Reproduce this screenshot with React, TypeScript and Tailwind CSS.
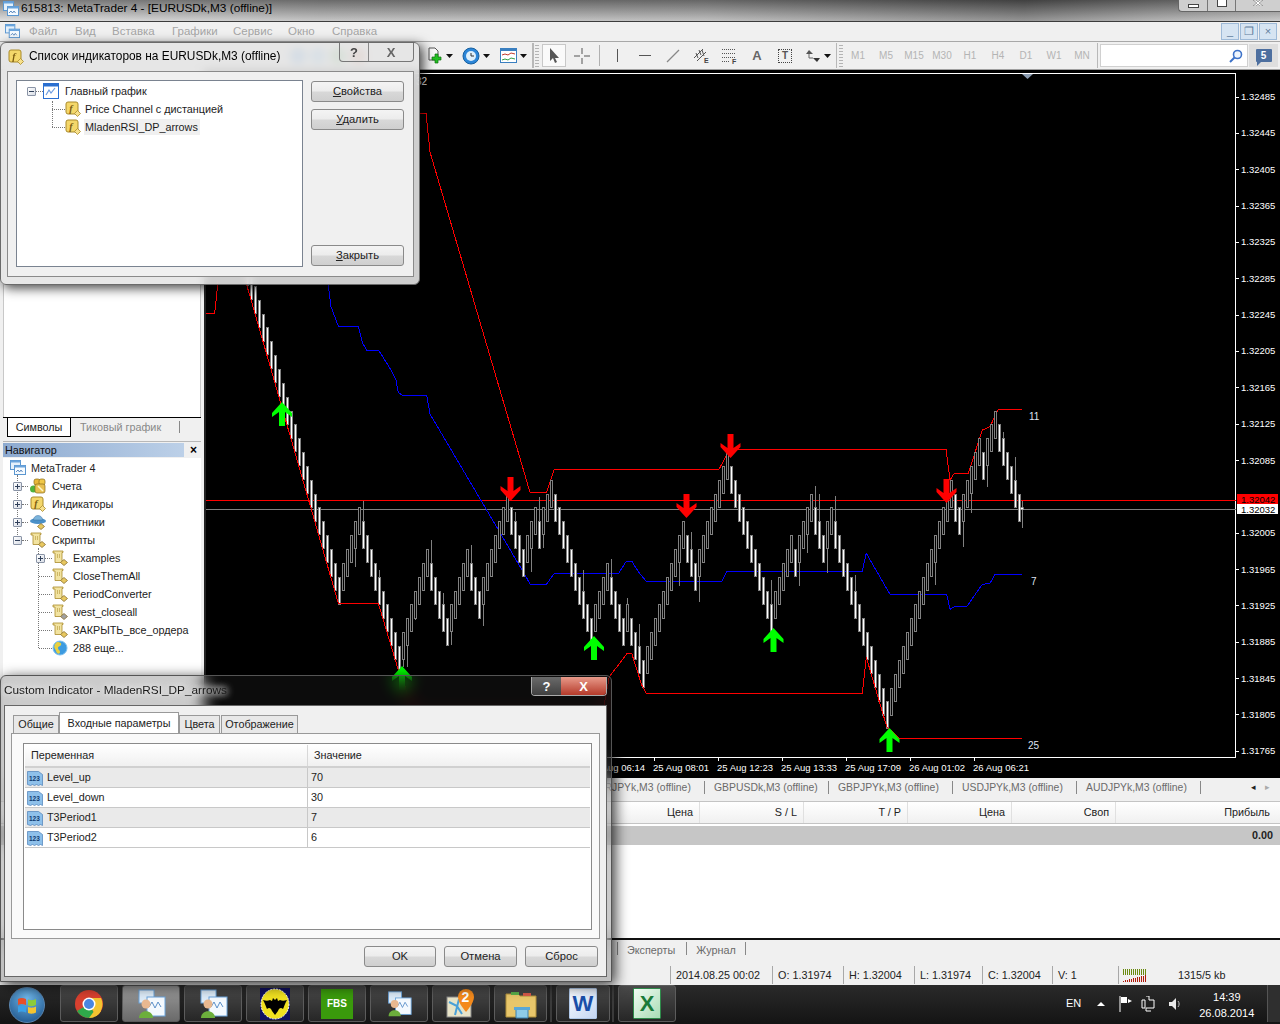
import React from 'react';

type Pt = [number, number];

// chart geometry read from the picture, in page pixels
const z9 = (pts: Pt[]): Pt[] => pts.map(([x, y]) => [206 + x / 3, 280 + y / 3]);
const z10 = (pts: Pt[]): Pt[] => pts.map(([x, y]) => [620 + x / 3, 400 + y / 3]);
const toPoints = (pts: Pt[]) => pts.map(([x, y]) => `${x.toFixed(1)},${y.toFixed(1)}`).join(' ');

const runs = [5, -10, 7, -5, 5, -3, 7, -4, 3, -1, 3, -10, 4, -4, 1, -4, 10, -3, 8, -11, 5, -1, 4, -3, 2, -14, 16, -2, 5, -1, 3, -6];
const STEP = 13.85;

const buildCandles = () => {
  const list: { i: number; top: number; up: boolean }[] = [];
  for (let i = -23; i <= 0; i++) list.push({ i, top: 576.7 + i * STEP, up: false });
  let k = 0;
  let i = 0;
  runs.forEach((r) => {
    for (let n = 0; n < Math.abs(r); n++) {
      k += r > 0 ? -1 : 1;
      i += 1;
      list.push({ i, top: 576.7 + k * STEP, up: r > 0 });
    }
  });
  return list;
};
const candles = buildCandles();

const wicks: Pt[] = [
  [6, 501], [4, 567], [10, 570], [16, 667], [17, 667], [19, 620], [23, 540], [26, 593], [28, 645], [33, 545], [36, 626],
  [44, 512], [46, 573], [48, 572], [50, 497], [51, 548], [61, 570], [68, 559], [72, 598], [75, 624], [85, 586], [88, 532],
  [90, 602], [108, 580], [115, 586], [117, 553], [119, 486], [120, 494], [122, 573], [124, 496], [129, 575], [145, 607],
  [149, 585], [156, 547], [158, 513], [162, 487], [166, 432], [169, 457],
];

const redLower = [
  // the stretch under the second dialog runs low enough to stay hidden
  ...z9([[118, 0], [397, 970], [517, 970], [577, 1170], [590, 1195], [620, 1300], [1190, 1300], [1210, 1190], [1260, 1125]]),
  ...z10([[20, 760], [35, 760], [65, 855], [79, 880], [727, 880], [739, 772], [800, 980], [838, 1015], [1205, 1015]]),
];
const redUpper: Pt[] = [
  [420, 113], [426, 113], [430, 152], [530, 492.3], [546.7, 492.3], [554.3, 469.3], [719, 469.3], [726.7, 455], [730, 449.3],
  [946, 449.3], [950, 480], [954.3, 473.3], [968.3, 473.3], [982.3, 430], [990, 426.7], [998.3, 409.3], [1021.7, 409.3],
];
const blue = [
  ...z9([[365, 0], [375, 80], [397, 138], [457, 138], [470, 190], [482, 211], [518, 211], [555, 270], [570, 300], [577, 338], [590, 346], [662, 346], [672, 402], [960, 890], [972, 912], [1022, 912], [1045, 880], [1238, 880], [1260, 845]]),
  ...z10([[20, 483], [35, 483], [55, 515], [79, 544], [305, 544], [320, 515], [330, 513], [727, 513], [739, 460], [810, 583], [980, 583], [990, 628], [1003, 620], [1040, 620], [1087, 553], [1110, 550], [1125, 523], [1205, 523]]),
];

const priceLabels = ['1.32485', '1.32445', '1.32405', '1.32365', '1.32325', '1.32285', '1.32245', '1.32205', '1.32165', '1.32125', '1.32085', '1.32005', '1.31965', '1.31925', '1.31885', '1.31845', '1.31805', '1.31765'];
const timeLabels = ['25 Aug 06:14', '25 Aug 08:01', '25 Aug 12:23', '25 Aug 13:33', '25 Aug 17:09', '26 Aug 01:02', '26 Aug 06:21'];

const Arrow = ({ x, y, up }: { x: number; y: number; up: boolean }) => {
  const pts: Pt[] = [[0, 0], [10, 11], [10, 15], [3, 10], [3, 24], [-3, 24], [-3, 10], [-10, 15], [-10, 11]];
  return (
    <polygon
      points={toPoints(pts.map(([a, b]) => [x + a, up ? y + b : y + 24 - b]))}
      fill={up ? '#00ff00' : '#ff0000'}
    />
  );
};

const ChartSvg = () => (
  <svg width={1074} height={708} viewBox="206 70 1074 708" className="block">
    <line x1={206} y1={73.5} x2={1236} y2={73.5} stroke="#fff" />
    <line x1={1235.5} y1={73} x2={1235.5} y2={757} stroke="#fff" />
    <line x1={206} y1={757.5} x2={1236} y2={757.5} stroke="#fff" />
    <polygon points="1022,74 1033,74 1027.5,79" fill="#8a9bb0" />
    <text x={416} y={85} fontSize={10} fill="#fff" fontFamily="Liberation Sans">32</text>

    <line x1={206} y1={500.5} x2={1236} y2={500.5} stroke="#ff0000" />
    <line x1={206} y1={509.5} x2={1236} y2={509.5} stroke="#808080" />

    <polyline points={toPoints([[206, 313.3], [214.7, 313.3], [217.7, 285], [218, 280]])} fill="none" stroke="#ff0000" shapeRendering="crispEdges" />
    <polyline points={toPoints(redUpper)} fill="none" stroke="#ff0000" shapeRendering="crispEdges" />
    <polyline points={toPoints(blue)} fill="none" stroke="#0000ff" shapeRendering="crispEdges" />

    {wicks.map(([i, end]) => {
      const c = candles.find((d) => d.i === i);
      if (!c) return null;
      const x = 338.5 + i * 4 + 1;
      return <line key={i} x1={x} x2={x} y1={c.top + 14} y2={end} stroke="#808080" shapeRendering="crispEdges" />;
    })}
    {candles.map((c) => (
      <rect
        key={c.i}
        x={338.5 + c.i * 4}
        y={Math.round(c.top) + 0.5}
        width={2}
        height={27}
        fill={c.up ? '#000' : '#fff'}
        stroke="#808080"
        shapeRendering="crispEdges"
      />
    ))}
    <line x1={1022.5} x2={1022.5} y1={501} y2={528} stroke="#808080" />
    <rect x={1020.5} y={507.5} width={3} height={2} fill="#fff" stroke="#808080" strokeWidth={0.5} />
    <polyline points={toPoints(redLower)} fill="none" stroke="#ff0000" shapeRendering="crispEdges" />

    <Arrow x={282} y={402} up />
    <Arrow x={402} y={666} up />
    <Arrow x={594} y={636} up />
    <Arrow x={773.5} y={628} up />
    <Arrow x={889.5} y={728} up />
    <Arrow x={510.5} y={477} up={false} />
    <Arrow x={686.5} y={494} up={false} />
    <Arrow x={730.5} y={434} up={false} />
    <Arrow x={946.5} y={479} up={false} />

    <g fontFamily="Liberation Sans" fontSize={10} fill="#dfe3f0">
      <text x={1029} y={420}>11</text>
      <text x={1031} y={585}>7</text>
      <text x={1028} y={749}>25</text>
    </g>

    <g fontFamily="Liberation Sans" fontSize={9.5} fill="#fff">
      {priceLabels.map((p) => {
        const n = Math.round((1.32485 - Number(p)) / 0.0004);
        const y = 96.5 + n * 36.35;
        return (
          <g key={p}>
            <line x1={1236} x2={1239} y1={Math.round(y) + 0.5} y2={Math.round(y) + 0.5} stroke="#fff" />
            <text x={1241} y={y + 3.5}>{p}</text>
          </g>
        );
      })}
      {timeLabels.map((t, i) => (
        <g key={t}>
          <line x1={590.5 + i * 64} x2={590.5 + i * 64} y1={757} y2={761} stroke="#fff" />
          <text x={589 + i * 64} y={771}>{t}</text>
        </g>
      ))}
    </g>
    <rect x={1237} y={494} width={41} height={10} fill="#ff0000" />
    <rect x={1237} y={504} width={41} height={10} fill="#fff" />
    <text x={1241} y={502.5} fontFamily="Liberation Sans" fontSize={9.5} fill="#000">1.32042</text>
    <text x={1241} y={512.5} fontFamily="Liberation Sans" fontSize={9.5} fill="#000">1.32032</text>
  </svg>
);

/* small icons */

const IndicatorIcon = ({ size = 16 }: { size?: number }) => (
  <svg width={size} height={size} viewBox="0 0 16 16" className="shrink-0">
    <rect x={1} y={1} width={12} height={12} rx={2} fill="#f4d76a" stroke="#a98a2a" />
    <text x={4.2} y={10.5} fontSize={10} fontStyle="italic" fontWeight="bold" fontFamily="Liberation Serif" fill="#7a5a10">f</text>
    <polygon points="12.5,9.5 15.5,12.5 12.5,15.5 9.5,12.5" fill="#f7e08c" stroke="#a98a2a" strokeWidth={0.8} />
  </svg>
);

const ScrollIcon = ({ gem = '#e8c860' }: { gem?: string }) => (
  <svg width={16} height={16} viewBox="0 0 16 16" className="shrink-0">
    <path d="M1 1h10v1.5H10V11h1.5v1.5H3V3H1z" fill="#f2e3a0" stroke="#a98a2a" strokeWidth={0.8} />
    <path d="M5 5h3M5 7h3" stroke="#a98a2a" strokeDasharray="1 1" />
    <polygon points="12,9.5 15.5,12.5 12,15.5 8.5,12.5" fill={gem} stroke="#8a7030" strokeWidth={0.8} />
  </svg>
);

const AccountIcon = () => (
  <svg width={16} height={16} viewBox="0 0 16 16" className="shrink-0">
    <circle cx={3.5} cy={11} r={3.5} fill="#4fb33c" />
    <rect x={4} y={1} width={6} height={6} rx={2} fill="#e8b838" stroke="#8a6a18" strokeWidth={0.7} />
    <rect x={9} y={1} width={6} height={6} rx={2} fill="#f0c848" stroke="#8a6a18" strokeWidth={0.7} />
    <rect x={5} y={6} width={10} height={9} rx={2} fill="#e8c050" stroke="#8a6a18" strokeWidth={0.7} />
    <path d="M8 8l5 5" stroke="#fff6c8" strokeWidth={1.5} />
  </svg>
);

const ExpertIcon = () => (
  <svg width={16} height={16} viewBox="0 0 16 16" className="shrink-0">
    <ellipse cx={8} cy={7} rx={8} ry={3} fill="#4a90c8" />
    <path d="M3.5 6c0-6 9-6 9 0z" fill="#7cb4dc" stroke="#3a70a0" strokeWidth={0.5} />
    <polygon points="11,9.5 14.5,12.5 11,15.5 7.5,12.5" fill="#e8c860" stroke="#8a7030" strokeWidth={0.8} />
  </svg>
);

const GlobeIcon = () => (
  <svg width={16} height={16} viewBox="0 0 16 16" className="shrink-0">
    <circle cx={8} cy={8} r={7} fill="#3d9be0" stroke="#7cc0f0" />
    <path d="M5 2c3 0 5 1 4 3-1 2-3 1-3 3s2 2 2 4-2 2-3 1-1-3-2-4-1-3 0-5z" fill="#e8d040" />
  </svg>
);

const MtIcon = ({ size = 16 }: { size?: number }) => (
  <svg width={size} height={size} viewBox="0 0 16 16" className="shrink-0">
    <rect x={0.5} y={0.5} width={10} height={9} fill="#e4f0fb" stroke="#5a96d0" />
    <rect x={0.5} y={0.5} width={10} height={2} fill="#6aa4dc" />
    <rect x={4.5} y={5.5} width={11} height={9} fill="#f6fbff" stroke="#5a96d0" />
    <rect x={4.5} y={5.5} width={11} height={2} fill="#6aa4dc" />
    <path d="M6 12l2-2 1.5 2 1.5-2 1.5 2" fill="none" stroke="#3a70b0" strokeWidth={0.8} />
  </svg>
);

const ChartWinIcon = () => (
  <svg width={16} height={16} viewBox="0 0 16 16" className="shrink-0">
    <rect x={0.5} y={0.5} width={15} height={15} fill="#fff" stroke="#2a6fd0" />
    <rect x={0.5} y={0.5} width={15} height={3} fill="#2a6fd0" />
    <path d="M3 12l3-5 2 3 4-5" fill="none" stroke="#6a9ae0" strokeWidth={1.2} />
  </svg>
);

const NumIcon = () => (
  <svg width={16} height={16} viewBox="0 0 16 16" className="shrink-0">
    <path d="M0.5 1.5h11l4 3v11l-2-1-2 1-2-1-2 1-2-1-2 1-3-1z" fill="#8ec0ea" stroke="#4a80b8" strokeWidth={0.7} />
    <text x={2} y={11} fontSize={6.5} fontWeight="bold" fontFamily="Liberation Sans" fill="#103a70">123</text>
  </svg>
);

const Expander = ({ open }: { open?: boolean }) => (
  <span className="relative flex h-[9px] w-[9px] shrink-0 items-center justify-center rounded-[1px] border border-[#8a94a6] bg-[linear-gradient(135deg,#fff,#d8dde6)]">
    <span className="h-px w-[5px] bg-[#30405a]" />
    {!open && <span className="absolute h-[5px] w-px bg-[#30405a]" />}
  </span>
);

const Grip = () => (
  <span className="flex h-[22px] w-[4px] shrink-0 flex-col justify-between">
    {[0, 1, 2, 3, 4, 5, 6, 7].map((n) => (
      <span key={n} className="h-px w-full bg-[#b4b4b4]" />
    ))}
  </span>
);

const Caret = () => (
  <svg width={7} height={4} viewBox="0 0 7 4" className="shrink-0">
    <polygon points="0,0 7,0 3.5,4" fill="#111" />
  </svg>
);

const Tool = ({ children, active }: { children: React.ReactNode; active?: boolean }) => (
  <span className={`flex h-[23px] w-[24px] shrink-0 items-center justify-center ${active ? 'border border-[#c8c8c8] bg-[#fafafa]' : ''}`}>
    {children}
  </span>
);

const WinButton = ({ children, className = '' }: { children: React.ReactNode; className?: string }) => (
  <button
    type="button"
    className={`flex h-[21px] items-center justify-center rounded-[3px] border border-[#8a8a8a] bg-[linear-gradient(#f4f4f4_0%,#ececec_48%,#d8d8d8_52%,#cfcfcf_100%)] text-[11.2px] text-[#222] ${className}`}
  >
    {children}
  </button>
);

/* window chrome */

const TitleBar = () => (
  <div className="relative flex h-[22px] items-start gap-[2px] border-b border-[#3c3c3c] bg-[linear-gradient(180deg,rgba(30,30,30,0.45),rgba(255,255,255,0.35)),linear-gradient(90deg,#d0d0d0_0%,#a8a8a8_25%,#a0a0a0_55%,#5c5c5c_80%,#8c8c8c_90%,#b0b0b0_100%)] pl-[3px] pt-[1px]">
    <MtIcon />
    <span className="text-[11.8px] leading-[14px] text-black">615813: MetaTrader 4 - [EURUSDk,M3 (offline)]</span>
    <div className="absolute right-0 top-0 flex h-[12px] w-[102px] overflow-hidden rounded-bl-[4px] border-b border-l border-[#666] bg-[#cfcfcf]">
      <span className="flex w-[29px] items-center justify-center border-r border-[#777]">
        <span className="h-[4px] w-[11px] border border-[#444] bg-white" />
      </span>
      <span className="flex w-[28px] items-start justify-center border-r border-[#777]">
        <span className="h-[7px] w-[10px] border border-t-0 border-[#444] bg-white" />
      </span>
      <span className="flex flex-1 items-start justify-center">
        <svg width={12} height={6} viewBox="0 0 12 6">
          <path d="M1 0l4 3-4 3h3l2-2 2 2h3L7 3l4-3H8L6 2 4 0z" fill="#fff" stroke="#666" strokeWidth={0.5} />
        </svg>
      </span>
    </div>
  </div>
);

const menuItems: [string, string][] = [
  ['Файл', 'w-[46px]'],
  ['Вид', 'w-[37px]'],
  ['Вставка', 'w-[60px]'],
  ['Графики', 'w-[61px]'],
  ['Сервис', 'w-[55px]'],
  ['Окно', 'w-[44px]'],
  ['Справка', 'w-[50px]'],
];

const MenuBar = () => (
  <div className="flex h-[20px] items-center border-b border-[#a8a8a8] bg-[#f0f0f0] pl-[5px] text-[11.5px]">
    <span className="mr-[9px]">
      <MtIcon size={15} />
    </span>
    <div className="flex flex-1">
      {menuItems.map(([m, w]) => (
        <span key={m} className={`${w} text-[#a6a6a6]`}>{m}</span>
      ))}
    </div>
    <div className="mr-[3px] flex gap-[1px]">
      {['_', '❐', '×'].map((g) => (
        <span key={g} className="flex h-[17px] w-[18px] items-center justify-center border border-[#9ebad8] bg-[#d6e4f2] text-[11px] leading-none text-[#5f7c9c]">{g}</span>
      ))}
    </div>
  </div>
);

const frames = ['M1', 'M5', 'M15', 'M30', 'H1', 'H4', 'D1', 'W1', 'MN'];

const Toolbar = () => (
  <div className="flex h-[28px] items-center border-b border-[#a0a0a0] bg-[#f0f0f0]">
    {/* hidden behind the glass of the first dialog */}
    <div className="ml-[290px] flex w-[135px] shrink-0 gap-[4px]">
      <span className="h-[16px] w-[16px] rounded-full bg-[#3d8fe0]" />
      <span className="h-[16px] w-[16px] rounded-full bg-[#69b3ec]" />
      <span className="h-[16px] w-[16px] rounded-full bg-[#5fb060]" />
      <span className="h-[16px] w-[16px] rounded-full bg-[#d87f60]" />
    </div>
    <span className="flex w-[21px] shrink-0 justify-center">
      <svg width={17} height={18} viewBox="0 0 17 18">
        <path d="M2 1h6l3 3v9H2z" fill="#f8f8f8" stroke="#555" />
        <path d="M8 7h3v3h3v3h-3v3H8v-3H5v-3h3z" fill="#22c022" stroke="#107010" strokeWidth={0.7} />
      </svg>
    </span>
    <Caret />
    <span className="ml-[8px] flex w-[20px] shrink-0 justify-center">
      <svg width={18} height={18} viewBox="0 0 18 18">
        <circle cx={9} cy={9} r={8} fill="#2c86d8" stroke="#17609f" />
        <circle cx={9} cy={9} r={5} fill="#dff0fb" />
        <path d="M9 6v3h3" stroke="#333" fill="none" />
      </svg>
    </span>
    <span className="ml-[2px] shrink-0"><Caret /></span>
    <span className="ml-[8px] flex w-[20px] shrink-0 justify-center">
      <svg width={17} height={15} viewBox="0 0 17 15">
        <rect x={0.5} y={0.5} width={16} height={14} fill="#fff" stroke="#3a7fc0" />
        <rect x={1} y={1} width={15} height={2} fill="#3a7fc0" />
        <path d="M2 7l3-1 3 1 3-2 4 1" fill="none" stroke="#c0392b" />
        <path d="M2 12l3-1 3 1 3-2 4 1" fill="none" stroke="#2f9e44" />
      </svg>
    </span>
    <span className="ml-[2px] shrink-0"><Caret /></span>
    <span className="ml-[5px] h-[25px] w-[2px] shrink-0 bg-[#b8b8b8]" />
    <span className="ml-px shrink-0"><Grip /></span>
    <div className="ml-[3px] flex shrink-0 items-center gap-[4px]">
      <Tool active>
        <svg width={11} height={16} viewBox="0 0 11 16"><path d="M1 0v13l3-3 2 5 2-1-2-4h4z" fill="#555" /></svg>
      </Tool>
      <Tool>
        <svg width={16} height={16} viewBox="0 0 16 16"><path d="M8 0v6M8 10v6M0 8h6M10 8h6" stroke="#555" /></svg>
      </Tool>
      <span className="mx-[1px] h-[21px] w-px shrink-0 bg-[#b0b0b0]" />
      <Tool><span className="h-[13px] w-px bg-[#555]" /></Tool>
      <Tool><span className="h-px w-[12px] bg-[#555]" /></Tool>
      <Tool>
        <svg width={14} height={14} viewBox="0 0 14 14"><path d="M1 13L13 1" stroke="#888" strokeWidth={1.2} /></svg>
      </Tool>
      <Tool>
        <svg width={16} height={17} viewBox="0 0 16 17">
          <path d="M1 11L10 2M4 14L13 5M3 6l2 5M6 3l2 5M9 3l2 6" stroke="#555" />
          <text x={11} y={16} fontSize={7} fontWeight="bold" fontFamily="Liberation Sans" fill="#444">E</text>
        </svg>
      </Tool>
      <Tool>
        <svg width={16} height={16} viewBox="0 0 16 16">
          <path d="M1 1.5h13M1 5.5h13M1 9.5h13M1 13.5h8" stroke="#555" strokeDasharray="1 1" />
          <text x={11} y={16} fontSize={7} fontWeight="bold" fontFamily="Liberation Sans" fill="#444">F</text>
        </svg>
      </Tool>
      <Tool><span className="text-[13px] font-bold text-[#666]">A</span></Tool>
      <Tool>
        <span className="flex h-[14px] w-[14px] items-center justify-center border border-dotted border-[#444] text-[10px] font-bold leading-none text-[#555]">T</span>
      </Tool>
      <Tool>
        <svg width={14} height={14} viewBox="0 0 14 14">
          <polygon points="3,1 7,5 0,5" fill="#555" />
          <polygon points="11,13 7,9 14,9" fill="#333" />
          <path d="M3 5v4h4" fill="none" stroke="#666" />
        </svg>
      </Tool>
    </div>
    <span className="ml-[-1px] shrink-0"><Caret /></span>
    <span className="ml-[5px] h-[25px] w-px shrink-0 bg-[#b8b8b8]" />
    <span className="ml-[2px] shrink-0"><Grip /></span>
    <div className="ml-px flex shrink-0">
      {frames.map((f) => (
        <span key={f} className="w-[28px] shrink-0 text-center text-[10px] text-[#b4b4b4]">{f}</span>
      ))}
    </div>
    <span className="ml-px h-[25px] w-px shrink-0 bg-[#b8b8b8]" />
    <div className="ml-[2px] flex h-[23px] w-[148px] shrink-0 items-center justify-end border border-[#d0d0d0] bg-white pr-[4px]">
      <svg width={14} height={14} viewBox="0 0 14 14">
        <circle cx={8.5} cy={5.5} r={4} fill="#eef5fd" stroke="#3d72c8" strokeWidth={1.6} />
        <path d="M5.5 8.5L1 13" stroke="#3d72c8" strokeWidth={2} />
      </svg>
    </div>
    <span className="ml-px flex h-[23px] w-[29px] shrink-0 items-center justify-center bg-[#dedede]">
      <span className="relative flex h-[13px] w-[16px] items-center justify-center rounded-[1px] bg-[#4d6f9f] text-[10px] font-bold leading-none text-white">
        5
        <span className="absolute -bottom-[4px] left-[1px] h-0 w-0 border-r-[4px] border-t-[4px] border-r-transparent border-t-[#4d6f9f]" />
      </span>
    </span>
  </div>
);

/* navigator */

type NavRow = { label: string; icon: React.ReactNode; level: 0 | 1 | 2; exp?: 'plus' | 'minus' };

const navRows: NavRow[] = [
  { label: 'MetaTrader 4', icon: <MtIcon />, level: 0 },
  { label: 'Счета', icon: <AccountIcon />, level: 1, exp: 'plus' },
  { label: 'Индикаторы', icon: <IndicatorIcon />, level: 1, exp: 'plus' },
  { label: 'Советники', icon: <ExpertIcon />, level: 1, exp: 'plus' },
  { label: 'Скрипты', icon: <ScrollIcon />, level: 1, exp: 'minus' },
  { label: 'Examples', icon: <ScrollIcon />, level: 2, exp: 'plus' },
  { label: 'CloseThemAll', icon: <ScrollIcon />, level: 2 },
  { label: 'PeriodConverter', icon: <ScrollIcon />, level: 2 },
  { label: 'west_closeall', icon: <ScrollIcon gem="#a0a0a0" />, level: 2 },
  { label: 'ЗАКРЫТЬ_все_ордера', icon: <ScrollIcon />, level: 2 },
  { label: '288 еще...', icon: <GlobeIcon />, level: 2 },
];

const Sidebar = () => (
  <div className="flex w-[204px] shrink-0 flex-col bg-[#f0f0f0] pl-[3px] pr-[3px]">
    <div className="h-[347px] border-x border-[#c8c8c8] bg-white" />
    <div className="flex h-[19px] items-start border-t border-black pl-[4px]">
      <span className="flex h-[19px] w-[64px] items-center justify-center border-x border-b border-black bg-white">Символы</span>
      <span className="ml-[9px] flex-1 text-[#888] leading-[18px]">Тиковый график</span>
      <span className="mr-[21px] mt-[3px] h-[12px] w-px bg-[#888]" />
    </div>
    <div className="mt-[5px] h-px bg-[#b8b8b8]" />
    <div className="mt-[1px] flex h-[14px] items-center justify-between">
      <span className="flex h-[14px] w-[181px] items-center bg-[linear-gradient(90deg,#8daad0,#bcd0e8)] pl-[2px] leading-none text-[#111]">Навигатор</span>
      <span className="mr-[4px] text-[12px] font-bold leading-none text-black">×</span>
    </div>
    <div className="relative mt-px flex-1 bg-white pt-[1px]">
      {/* tree guide lines */}
      <span className="absolute left-[14px] top-[17px] h-[66px] border-l border-dotted border-[#777]" />
      <span className="absolute left-[35px] top-[90px] h-[100px] border-l border-dotted border-[#777]" />
      {navRows.map((r) => (
        <div key={r.label} className="flex h-[18px] items-center whitespace-nowrap">
          {r.level === 0 && <span className="w-[7px]" />}
          {r.level === 1 && (
            <span className="flex w-[27px] items-center pl-[10px]">
              {r.exp && <Expander open={r.exp === 'minus'} />}
              <span className="w-[6px] border-t border-dotted border-[#777]" />
            </span>
          )}
          {r.level === 2 && (
            <span className="flex w-[49px] items-center justify-end">
              {r.exp && <Expander />}
              <span className={`${r.exp ? 'w-[7px]' : 'w-[13px]'} border-t border-dotted border-[#777]`} />
            </span>
          )}
          {r.icon}
          <span className={r.level === 0 ? 'ml-[5px]' : r.level === 1 ? 'ml-[6px]' : 'ml-[5px]'}>{r.label}</span>
        </div>
      ))}
    </div>
  </div>
);

/* terminal */

const chartTabs = ['EURJPYk,M3 (offline)', 'GBPUSDk,M3 (offline)', 'GBPJPYk,M3 (offline)', 'USDJPYk,M3 (offline)', 'AUDJPYk,M3 (offline)'];
const tableCols = ['Цена', 'S / L', 'T / P', 'Цена', 'Своп'];

const Terminal = () => (
  <div className="flex h-[187px] flex-col bg-white">
    <div className="flex h-[20px] items-center bg-[#f0f0f0] pl-[581px] text-[10.4px] text-[#6a6a6a]">
      {chartTabs.map((t) => (
        <span key={t} className="flex w-[124px] shrink-0 items-center justify-between whitespace-nowrap pl-[9px]">
          <span>{t}</span>
          <span className="h-[13px] w-px bg-[#888]" />
        </span>
      ))}
      <span className="ml-[50px] text-[9px] text-[#222]">◂</span>
      <span className="ml-[9px] text-[9px] text-[#aaa]">▸</span>
    </div>
    <div className="h-[3px] bg-[#f0f0f0]" />
    <div className="flex h-[23px] border-y border-[#c4c4c4] bg-[linear-gradient(#ffffff,#f0f0f0)]">
      <span className="w-[596px] border-r border-[#e0e0e0]" />
      {tableCols.map((c, i) => (
        <span key={i} className="flex w-[104px] items-center justify-end border-r border-[#e0e0e0] pr-[6px]">{c}</span>
      ))}
      <span className="flex flex-1 items-center justify-end pr-[10px]">Прибыль</span>
    </div>
    <div className="mt-[2px] flex h-[19px] items-center justify-end bg-[#c6c6c6] pr-[7px] font-bold">0.00</div>
    <div className="flex-1" />
    <div className="flex h-[27px] items-start border-t-2 border-[#111] bg-[#f0f0f0] pt-[2px] text-[#6a6a6a]">
      <span className="ml-[617px] h-[13px] w-px bg-[#888]" />
      <span className="ml-[9px]">Эксперты</span>
      <span className="ml-[11px] h-[13px] w-px bg-[#888]" />
      <span className="ml-[9px]">Журнал</span>
      <span className="ml-[9px] h-[13px] w-px bg-[#888]" />
    </div>
  </div>
);

const statusCells: [string, string][] = [
  ['2014.08.25 00:02', 'w-[102px]'],
  ['O: 1.31974', 'w-[71px]'],
  ['H: 1.32004', 'w-[71px]'],
  ['L: 1.31974', 'w-[68px]'],
  ['C: 1.32004', 'w-[70px]'],
  ['V: 1', 'w-[66px]'],
];

const StatusBar = () => (
  <div className="flex h-[20px] items-center bg-[#f0f0f0] pl-[670px]">
    {statusCells.map(([t, w]) => (
      <span key={t} className={`${w} h-[18px] border-l border-[#a8a8a8] pl-[5px] leading-[18px]`}>{t}</span>
    ))}
    <span className="flex h-[18px] w-[60px] items-center border-l border-[#a8a8a8] pl-[4px]">
      <svg width={25} height={13} viewBox="0 0 25 13" shapeRendering="crispEdges">
        <rect x={0} y={0} width={24} height={6} fill="#6a8a10" />
        <path d="M0 6L24 0V13H0z" fill="#8a9a20" opacity={0} />
        {Array.from({ length: 12 }).map((_, i) => (
          <g key={i}>
            <rect x={i * 2 + 1} y={0} width={1} height={13} fill="#f0f0f0" />
            <rect x={i * 2} y={Math.round(6 + (11 - i) / 2)} width={1} height={13 - Math.round(6 + (11 - i) / 2)} fill="#b01808" />
          </g>
        ))}
      </svg>
    </span>
    <span>1315/5 kb</span>
  </div>
);

/* taskbar */

const TaskButton = ({ children, active, width = 'w-[58px]' }: { children: React.ReactNode; active?: boolean; width?: string }) => (
  <span
    className={`flex h-[37px] ${width} shrink-0 items-center justify-center rounded-[3px] border border-[#5c5c5c] ${active ? 'bg-[linear-gradient(#9a9a9a,#6a6a6a)]' : 'bg-[linear-gradient(#4a4a4a,#262626)]'}`}
  >
    {children}
  </span>
);

const MtPerson = ({ size = 30 }: { size?: number }) => (
  <svg width={size} height={size} viewBox="0 0 30 30">
    <rect x={3} y={1} width={15} height={13} fill="#dcebf8" stroke="#6aa4dc" />
    <rect x={11} y={8} width={18} height={19} fill="#f4f9fe" stroke="#6aa4dc" />
    <path d="M13 18l3-5 3 6 3-6 3 5" fill="none" stroke="#5a8fc8" />
    <circle cx={10} cy={15} r={4.5} fill="#e8b890" />
    <path d="M3 29c0-9 14-9 14 0z" fill="#6cae3c" />
  </svg>
);

const Taskbar = () => (
  <div className="flex h-[39px] items-start bg-[linear-gradient(#2a2a2a,#141414)] text-white">
    <span className="ml-[9px] mt-[2px] flex h-[36px] w-[36px] shrink-0 items-center justify-center rounded-full border border-[#5a86b0] bg-[radial-gradient(circle_at_50%_30%,#6fb6e8,#154a82)]">
      <svg width={20} height={18} viewBox="0 0 20 18">
        <path d="M1 3c3-1.500 5-1 8 0v6c-3-1-5-1.500-8 0z" fill="#e8502a" />
        <path d="M11 3.500c3 1 5 1 8-.5v6c-3 1.500-5 1.500-8 .5z" fill="#8ccb3a" />
        <path d="M1 10.500c3-1.500 5-1 8 0v6c-3-1-5-1.500-8 0z" fill="#39a0e8" />
        <path d="M11 11c3 1 5 1 8-.5v6c-3 1.500-5 1.500-8 .5z" fill="#f4c430" />
      </svg>
    </span>
    <div className="ml-[15px] flex gap-[4px]">
      <TaskButton>
        <svg width={28} height={28} viewBox="0 0 28 28">
          <circle cx={14} cy={14} r={14} fill="#d8402f" />
          <path d="M14 14L2 21A14 14 0 0 0 21 26z" fill="#2fa84a" />
          <path d="M14 14L26 21A14 14 0 0 1 14 28 L20 20z" fill="#f4c430" />
          <path d="M14 8h12a14 14 0 0 1 -5 18l-7-12z" fill="#f4c430" />
          <circle cx={14} cy={14} r={6.500} fill="#fff" />
          <circle cx={14} cy={14} r={5} fill="#4a86e0" />
        </svg>
      </TaskButton>
      <TaskButton active><MtPerson /></TaskButton>
      <TaskButton><MtPerson /></TaskButton>
      <TaskButton>
        <svg width={30} height={32} viewBox="0 0 30 32">
          <rect width={30} height={32} fill="#101060" />
          <ellipse cx={15} cy={16} rx={14} ry={15} fill="#f0e020" stroke="#fff" strokeDasharray="2 1" />
          <path d="M3 12c3 1 5 1 7 0l2 1 1-3 2 2 2-2 1 3 2-1c2 1 4 1 7 0-2 3-3 7-4 9-2-2-4-1-5 2l-3 4-3-4c-1-3-3-4-5-2-1-2-2-6-4-9z" fill="#000" />
        </svg>
      </TaskButton>
      <TaskButton>
        <span className="flex h-[30px] w-[32px] items-center justify-center bg-[#3a9a0c] text-[10px] font-bold leading-none text-white">FBS</span>
      </TaskButton>
      <TaskButton><MtPerson size={26} /></TaskButton>
      <TaskButton>
        <svg width={32} height={32} viewBox="0 0 32 32">
          <rect x={2} y={9} width={24} height={20} fill="#e8e4c8" stroke="#888" />
          <path d="M4 14l8 4 5 8M14 11l-4 16" stroke="#4aa0d8" strokeWidth={2} fill="none" />
          <path d="M21 1a8 8 0 0 1 8 8c0 6-8 15-8 15s-8-9-8-15a8 8 0 0 1 8-8z" fill="#f48a1c" />
          <text x={16.500} y={14} fontSize={14} fontWeight="bold" fontFamily="Liberation Sans" fill="#fff">2</text>
        </svg>
      </TaskButton>
      <TaskButton width="w-[53px]">
        <svg width={32} height={30} viewBox="0 0 32 30">
          <path d="M1 5h12l2 2h16v21H1z" fill="#e8c66a" stroke="#b0903a" />
          <rect x={6} y={3} width={8} height={3} fill="#5ab04a" />
          <rect x={18} y={4} width={8} height={3} fill="#d85a4a" />
          <path d="M11 20h12v9H11z" fill="#8ecbe8" stroke="#3a80b0" />
          <rect x={9} y={18} width={16} height={3} fill="#5aa8d8" />
        </svg>
      </TaskButton>
      <span className="ml-[-1px] h-[37px] w-[2px] shrink-0 bg-[#3a3a3a]" />
      <TaskButton width="w-[54px]">
        <span className="flex h-[31px] w-[28px] items-center justify-center rounded-[1px] border border-[#b0c8e8] bg-[linear-gradient(135deg,#fafcff,#c4d6f2)] text-[22px] font-bold leading-none text-[#1a4ea8]">W</span>
      </TaskButton>
      <span className="ml-[-2px] h-[37px] w-[2px] shrink-0 bg-[#3a3a3a]" />
      <TaskButton>
        <span className="flex h-[31px] w-[28px] items-center justify-center rounded-[1px] border border-[#2f8a4a] bg-[linear-gradient(135deg,#f2fbf4,#a8dcb4)] text-[22px] font-bold leading-none text-[#1a7a3a]">X</span>
      </TaskButton>
    </div>
    <span className="ml-[390px] mt-[10px] text-[11px]">EN</span>
    <span className="ml-[16px] mt-[17px] h-0 w-0 border-x-[4px] border-b-[4px] border-x-transparent border-b-white" />
    <svg width={14} height={16} viewBox="0 0 14 16" className="ml-[14px] mt-[11px] shrink-0">
      <path d="M1 0v16" stroke="#fff" />
      <path d="M2 1h6v6H2zM9 3l4 2-4 2z" fill="#fff" />
    </svg>
    <svg width={14} height={16} viewBox="0 0 14 16" className="ml-[8px] mt-[11px] shrink-0">
      <path d="M5 0h3v4h5v8H5v3h5M1 4h3v8H1z" fill="none" stroke="#fff" />
    </svg>
    <svg width={12} height={14} viewBox="0 0 12 14" className="ml-[14px] mt-[12px] shrink-0">
      <path d="M0 5h3l4-4v12l-4-4H0z" fill="#e8e8e8" />
      <path d="M9 4c1.500 2 1.500 4 0 6" fill="none" stroke="#bbb" />
    </svg>
    <span className="ml-[19px] mt-[4px] flex w-[53px] flex-col items-center text-[11px] leading-[16px]">
      <span>14:39</span>
      <span>26.08.2014</span>
    </span>
    <span className="ml-[14px] h-[37px] w-[13px] border-l border-[#555] bg-[#2f2f2f]" />
  </div>
);

/* dialogs */

const IndicatorList = () => (
  <div className="absolute left-0 top-[42px] flex h-[243px] w-[420px] flex-col rounded-[6px] border border-[#6a6a6a] bg-[#e4e4e4]/90 pl-[6px] shadow-[3px_3px_12px_rgba(0,0,0,0.75)] backdrop-blur-[4px]">
    <div className="relative flex h-[28px] shrink-0 items-center gap-[5px] pl-[1px]">
      <IndicatorIcon />
      <span className="text-[11.9px] text-black">Список индикаторов на EURUSDk,M3 (offline)</span>
      <div className="absolute right-[5px] top-0 flex h-[19px] w-[75px] rounded-b-[4px] border border-t-0 border-[#777]">
        <span className="flex w-[29px] items-center justify-center border-r border-[#888] text-[13px] font-bold leading-none text-[#444]">?</span>
        <span className="flex flex-1 items-center justify-center text-[13px] font-bold leading-none text-[#666]">X</span>
      </div>
    </div>
    <div className="flex h-[206px] w-[407px] gap-[8px] border border-[#8a8a8a] bg-[#f0f0f0] p-[8px]">
      <div className="relative h-[187px] w-[287px] shrink-0 border border-[#7a8390] bg-white pl-[10px] pt-[1px] text-[#1c1c1c]">
        <span className="absolute left-[35px] top-[20px] h-[26px] border-l border-dotted border-[#777]" />
        <div className="flex h-[18px] items-center">
          <Expander open />
          <span className="w-[7px] border-t border-dotted border-[#777]" />
          <ChartWinIcon />
          <span className="ml-[6px]">Главный график</span>
        </div>
        <div className="flex h-[18px] items-center pl-[25px]">
          <span className="w-[13px] border-t border-dotted border-[#777]" />
          <IndicatorIcon />
          <span className="ml-[4px]">Price Channel с дистанцией</span>
        </div>
        <div className="flex h-[18px] items-center pl-[25px]">
          <span className="w-[13px] border-t border-dotted border-[#777]" />
          <IndicatorIcon />
          <span className="ml-[3px] bg-[#f0f0f0] px-[1px] pr-[2px]">MladenRSI_DP_arrows</span>
        </div>
      </div>
      <div className="flex h-[187px] flex-1 flex-col">
        <WinButton className="mt-[1px] w-[93px]"><span><u>С</u>войства</span></WinButton>
        <WinButton className="mt-[7px] w-[93px]"><span><u>У</u>далить</span></WinButton>
        <WinButton className="mb-px mt-auto w-[93px]"><span><u>З</u>акрыть</span></WinButton>
      </div>
    </div>
  </div>
);

const params: [string, string][] = [
  ['Level_up', '70'],
  ['Level_down', '30'],
  ['T3Period1', '7'],
  ['T3Period2', '6'],
];

const CustomIndicator = () => (
  <div className="absolute left-0 top-[675px] flex h-[307px] w-[612px] flex-col rounded-t-[6px] border border-[#555] bg-[#303030]/25 pl-[3px] pr-[4px] shadow-[3px_3px_14px_rgba(0,0,0,0.8)] backdrop-blur-[8px]">
    <div className="relative flex h-[29px] shrink-0 items-center">
      <span className="text-[11.8px] text-[#1a1a1a] [text-shadow:0_0_6px_#fff,0_0_8px_#ddd,0_0_10px_#ccc]">Custom Indicator - MladenRSI_DP_arrows</span>
      <div className="absolute right-[0px] top-[1px] flex h-[19px] w-[76px] overflow-hidden rounded-b-[4px] border border-t-0 border-[#aaa]">
        <span className="flex w-[29px] items-center justify-center bg-[linear-gradient(#6a6a6a,#404040)] text-[13px] font-bold leading-none text-white">?</span>
        <span className="flex flex-1 items-center justify-center bg-[linear-gradient(#e89a8a,#b53a2a)] text-[13px] font-bold leading-none text-white">X</span>
      </div>
    </div>
    <div className="flex h-[272px] flex-col border border-[#666] bg-[#f0f0f0] pl-[6px] pr-[6px]">
      <div className="mt-[6px] flex h-[21px] items-end pl-[2px]">
        <span className="flex h-[18px] w-[46px] items-center justify-center border border-b-0 border-[#999] bg-[#e8e8e8]">Общие</span>
        <span className="flex h-[21px] w-[120px] items-start justify-center border border-b-0 border-[#999] bg-white pt-[2px]">Входные параметры</span>
        <span className="flex h-[18px] w-[41px] items-center justify-center border border-b-0 border-[#999] bg-[#e8e8e8]">Цвета</span>
        <span className="ml-px flex h-[18px] w-[77px] items-center justify-center border border-b-0 border-[#999] bg-[#e8e8e8]">Отображение</span>
      </div>
      <div className="h-[206px] border border-[#999] bg-[#fafafa] px-[11px] pt-[9px]">
        <div className="h-[187px] w-[569px] border border-[#8a8a8a] bg-white px-px pt-px">
          <div className="flex h-[23px] border-b-2 border-[#d0d0d0] bg-[linear-gradient(#ffffff,#f0f0f0)]">
            <span className="flex w-[283px] items-center border-r border-[#d8d8d8] pl-[6px]">Переменная</span>
            <span className="flex items-center pl-[6px]">Значение</span>
          </div>
          {params.map(([n, v], i) => (
            <div key={n} className={`flex h-[20px] border-b border-[#c8c8c8] ${i % 2 === 0 ? 'bg-[#eaeaea]' : 'bg-white'}`}>
              <span className="flex w-[283px] items-center gap-[4px] border-r border-[#c8c8c8] pl-[2px]">
                <NumIcon />
                {n}
              </span>
              <span className="flex items-center pl-[3px]">{v}</span>
            </div>
          ))}
        </div>
      </div>
      <div className="mt-[7px] flex items-center justify-end gap-[8px] pr-[2px]">
        <WinButton className="w-[72px] border-[#3c7fb1] bg-[linear-gradient(#e8f4fc,#d4ebf9_48%,#bfe0f6_52%,#a8d4f0)]">OK</WinButton>
        <WinButton className="w-[73px]">Отмена</WinButton>
        <WinButton className="w-[73px]">Сброс</WinButton>
      </div>
    </div>
  </div>
);

export default function App() {
  return (
    <div className="relative flex h-[1024px] w-[1280px] flex-col overflow-hidden bg-[#f0f0f0] font-['Liberation_Sans',Arial,sans-serif] text-[10.8px] text-[#222]">
      <TitleBar />
      <MenuBar />
      <Toolbar />
      <div className="flex h-[708px]">
        <Sidebar />
        <div className="w-[2px] bg-[#222]" />
        <div className="flex-1 bg-black">
          <ChartSvg />
        </div>
      </div>
      <Terminal />
      <StatusBar />
      <Taskbar />
      <IndicatorList />
      <CustomIndicator />
    </div>
  );
}
